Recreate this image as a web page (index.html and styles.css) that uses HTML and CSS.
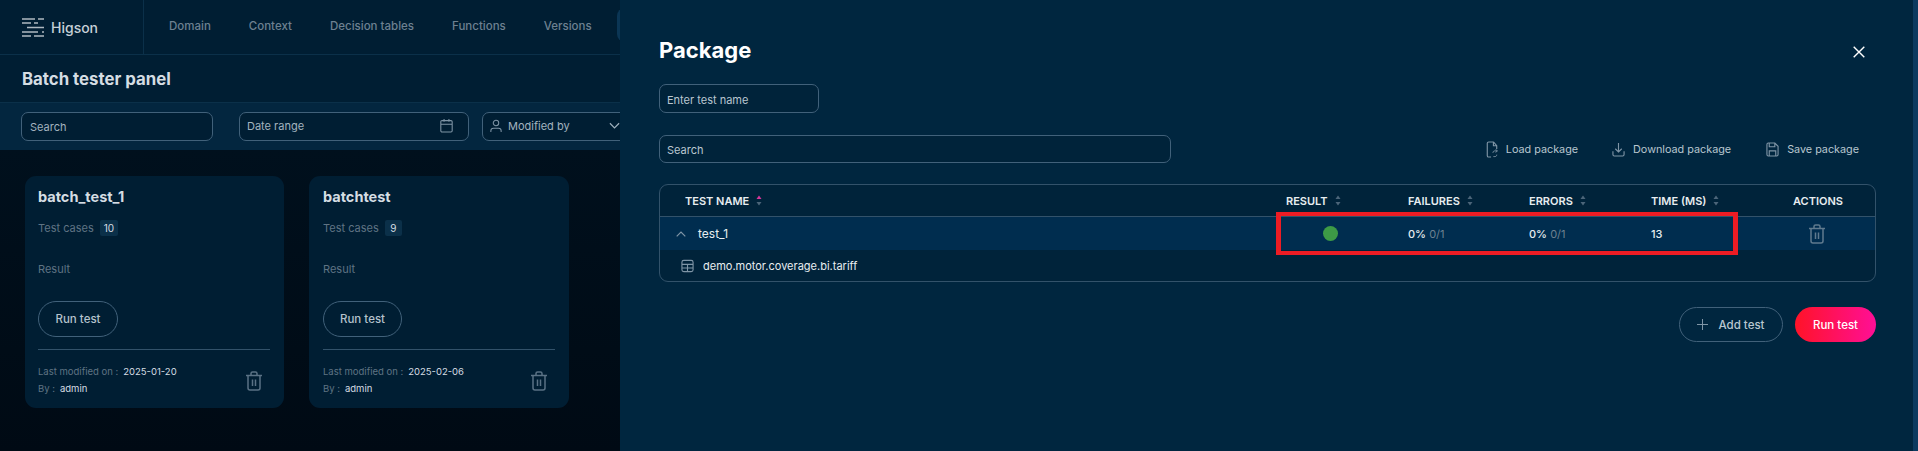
FILE: index.html
```html
<!DOCTYPE html>
<html lang="en">
<head>
<meta charset="utf-8">
<title>Batch tester panel</title>
<link rel="stylesheet" href="styles.css">
</head>
<body>
<svg class="defs" width="0" height="0" aria-hidden="true">
  <symbol id="trash" viewBox="0 0 18 20"><path d="M1 4.500h16M6 4.500V2.600C6 1.700 6.700 1 7.600 1h2.800c.9 0 1.600.7 1.600 1.600V4.500M3 4.500V17c0 1.100.9 2 2 2h8c1.100 0 2-.9 2-2V4.500" fill="none" stroke="currentColor" stroke-width="1.500"/><path d="M7.500 8.500v6.500M10.500 8.500v6.500" fill="none" stroke="currentColor" stroke-width="1.500"/></symbol>
  <symbol id="sort" viewBox="0 0 6 11"><path d="M3 0.500 5.500 4H.5z" fill="#4b6579"/><path d="M3 10.500 .5 7h5z" fill="#4b6579"/></symbol>
  <symbol id="sort-on" viewBox="0 0 6 11"><path d="M3 0.500 5.500 4H.5z" fill="#d6379a"/><path d="M3 10.500 .5 7h5z" fill="#4b6579"/></symbol>
</svg>
<div class="page">
  <header class="topbar">
    <div class="brand">
      <svg class="logo" viewBox="0 0 22 19" width="22" height="19"><path d="M0 1h13M16 1h6M0 5h9M12 5h4M5 9.500h17M0 14h16M20 14h2M0 18h9M12 18h10" fill="none" stroke="#aeb9c1" stroke-width="1.500"/></svg>
      <span class="brand-name">Higson</span>
    </div>
    <nav class="nav">
      <a class="nav-item">Domain</a>
      <a class="nav-item">Context</a>
      <a class="nav-item">Decision tables</a>
      <a class="nav-item">Functions</a>
      <a class="nav-item">Versions</a>
      <a class="nav-item nav-active">Batch tester</a>
    </nav>
  </header>
  <div class="titlebar"><h1>Batch tester panel</h1></div>
  <div class="filters">
    <div class="field field-search">Search</div>
    <div class="field field-date"><span>Date range</span>
      <svg viewBox="0 0 16 18" width="13" height="15"><path d="M1 4.500c0-.8.7-1.500 1.500-1.500h11c.8 0 1.500.7 1.500 1.500v11c0 .8-.7 1.500-1.500 1.500h-11C1.700 17 1 16.300 1 15.500zM1 7.500h14M5 1v3.500M11 1v3.500" fill="none" stroke="#7f95a6" stroke-width="1.300"/></svg>
    </div>
    <div class="field field-user">
      <svg viewBox="0 0 14 16" width="12" height="14"><circle cx="7" cy="4.500" r="3.200" fill="none" stroke="#7f95a6" stroke-width="1.200"/><path d="M1 15v-1.500C1 11.500 2.500 10.500 4 10.500h6c1.500 0 3 1 3 3V15" fill="none" stroke="#7f95a6" stroke-width="1.200"/></svg>
      <span>Modified by</span>
      <svg class="user-chevron" viewBox="0 0 12 8" width="11" height="8"><path d="M1 1l5 5 5-5" fill="none" stroke="#9fb0bd" stroke-width="1.300"/></svg>
    </div>
  </div>
  <main class="cards">
    <article class="card card-first">
      <h2>batch_test_1</h2>
      <div class="meta"><span class="muted">Test cases</span><span class="badge">10</span></div>
      <div class="result muted">Result</div>
      <button class="btn btn-card btn-wide">Run test</button>
      <div class="card-foot">
        <div class="mod">
          <div><span class="muted">Last modified on :</span><span class="val">2025-01-20</span></div>
          <div><span class="muted">By :</span><span class="val">admin</span></div>
        </div>
        <svg class="card-trash"><use href="#trash"/></svg>
      </div>
    </article>
    <article class="card">
      <h2>batchtest</h2>
      <div class="meta"><span class="muted">Test cases</span><span class="badge">9</span></div>
      <div class="result muted">Result</div>
      <button class="btn btn-card">Run test</button>
      <div class="card-foot">
        <div class="mod">
          <div><span class="muted">Last modified on :</span><span class="val">2025-02-06</span></div>
          <div><span class="muted">By :</span><span class="val">admin</span></div>
        </div>
        <svg class="card-trash"><use href="#trash"/></svg>
      </div>
    </article>
  </main>
</div>

<aside class="drawer">
  <div class="drawer-head">
    <h2 class="drawer-title">Package</h2>
    <svg class="close" viewBox="0 0 12 12" width="12" height="12"><path d="M.7.700l10.600 10.600M11.300.700.700 11.300" fill="none" stroke="#fff" stroke-width="1.400"/></svg>
  </div>
  <div class="dfield dfield-name">Enter test name</div>
  <div class="toolbar">
    <div class="dfield dfield-search">Search</div>
    <div class="actions">
      <a class="action action-load">
        <svg viewBox="0 0 12 18" width="12" height="17"><path d="M7.500 1H2.500C1.700 1 1 1.700 1 2.500v13c0 .8.700 1.500 1.500 1.500H5M7.500 1 11 5v3.500M7.500 1v4H11" fill="none" stroke="#7f95a6" stroke-width="1.200"/><path d="M7 12.500c0-1.500 1-2 2-2h2.500M10 8.800l1.700 1.700L10 12.200M11 14.500c0 1.500-1 2-2 2H7.500" fill="none" stroke="#7f95a6" stroke-width="1"/></svg>
        Load package</a>
      <a class="action action-down">
        <svg viewBox="0 0 14 16" width="13" height="15"><path d="M7 1v9.500M3.500 7.200 7 10.700l3.500-3.500M1 10v3.500c0 .8.700 1.500 1.500 1.500h9c.8 0 1.500-.7 1.500-1.500V10" fill="none" stroke="#7f95a6" stroke-width="1.200"/></svg>
        Download package</a>
      <a class="action">
        <svg viewBox="0 0 14 16" width="13" height="15"><path d="M1 2.500C1 1.700 1.700 1 2.500 1h7L13 4.500v9c0 .8-.7 1.500-1.500 1.500h-9C1.700 15 1 14.300 1 13.500zM3.500 1v4h6V1M3.500 15V9.500h7V15" fill="none" stroke="#7f95a6" stroke-width="1.200"/></svg>
        Save package</a>
    </div>
  </div>
  <section class="table">
    <div class="t-row t-head">
      <div class="c-name">TEST NAME<svg class="sort"><use href="#sort-on"/></svg></div>
      <div>RESULT<svg class="sort"><use href="#sort"/></svg></div>
      <div>FAILURES<svg class="sort"><use href="#sort"/></svg></div>
      <div>ERRORS<svg class="sort"><use href="#sort"/></svg></div>
      <div>TIME (MS)<svg class="sort"><use href="#sort"/></svg></div>
      <div>ACTIONS</div>
    </div>
    <div class="t-row t-body">
      <div class="c-test">
        <svg class="chev" viewBox="0 0 10 6" width="10" height="6"><path d="M.7 5.300 5 1l4.300 4.300" fill="none" stroke="#7f95a6" stroke-width="1.200"/></svg>
        <span class="test-name">test_1</span>
      </div>
      <div><span class="dot"></span></div>
      <div><b>0%</b> <span class="frac">0/1</span></div>
      <div><b>0%</b> <span class="frac">0/1</span></div>
      <div><b>13</b></div>
      <div><svg class="row-trash"><use href="#trash"/></svg></div>
    </div>
    <div class="t-sub">
      <svg viewBox="0 0 14 14" width="13" height="14"><path d="M1 3c0-1.100.9-2 2-2h8c1.100 0 2 .9 2 2v8c0 1.100-.9 2-2 2H3c-1.100 0-2-.9-2-2zM1 5.200h12M1 9.100h12M7 5.200V13" fill="none" stroke="#7f95a6" stroke-width="1.200"/></svg>
      <span>demo.motor.coverage.bi.tariff</span>
    </div>
  </section>
  <div class="foot">
    <button class="btn btn-add"><svg viewBox="0 0 12 12" width="11" height="11"><path d="M6 0v12M0 6h12" fill="none" stroke="#7f95a6" stroke-width="1.100"/></svg>Add test</button>
    <button class="btn btn-run">Run test</button>
  </div>
</aside>
<div class="annotation"></div>
</body>
</html>
```
FILE: styles.css
```css
* { box-sizing: border-box; }
html, body { margin: 0; height: 100%; }
body {
  position: relative;
  width: 1918px;
  height: 451px;
  overflow: hidden;
  background: #000c17;
  font-family: "Inter", "Noto Sans", sans-serif;
  font-size: 11px;
  color: #d5dde3;
}
.defs { position: absolute; }
h1, h2 { margin: 0; }

/* base page */
.page { height: 100%; display: flex; flex-direction: column; }
.topbar { height: 55px; display: flex; background: #001e33; border-bottom: 1px solid #0b3049; }
.brand { width: 144px; padding-left: 22px; display: flex; align-items: center; gap: 7px; border-right: 1px solid #0b3049; }
.logo { margin-top: 1px; }
.brand-name { font-size: 14px; font-weight: 500; color: #c6d0d7; }
.nav { display: flex; align-items: center; gap: 38px; padding: 0 0 2px 25px; white-space: nowrap; }
.nav-item { font-size: 11.500px; font-weight: 500; color: #6d8191; }
.nav-active { margin-left: -13px; height: 34px; padding: 10px 12px; border-radius: 8px; background: #0b3655; margin-top: -2px; }
.titlebar { height: 47px; padding-left: 22px; display: flex; align-items: center; background: #001e33; }
.titlebar h1 { font-size: 16.800px; font-weight: 700; color: #d5dde3; }
.filters { height: 48px; display: flex; align-items: center; padding-left: 21px; background: #03263f; border-top: 1px solid #0b3049; }
.field { height: 29px; display: flex; align-items: center; background: #001e33; border: 1px solid #41617a; border-radius: 7px; color: #a3b3bf; font-size: 11px; }
.field-search { width: 192px; padding-left: 8px; margin-right: 26px; }
.field-date { width: 230px; padding: 0 15px 2px 7px; margin-right: 13px; justify-content: space-between; }
.field-user { width: 170px; flex: none; padding: 0 0 2px 7px; gap: 6px; }
.user-chevron { margin-left: 33px; }
.cards { flex: 1; display: flex; gap: 25px; padding: 26px 0 0 25px; background: linear-gradient(180deg, #00101d 0%, #000a14 100%); }
.card { width: 260px; height: 232px; padding: 11px 13px 0 14px; background: #001e33; border-radius: 11px; }
.card-first { width: 259px; padding-left: 13px; }
.card h2 { font-size: 14.500px; line-height: 20px; font-weight: 700; color: #d5dde3; }
.muted { color: #5f7383; }
.meta { margin-top: 13px; height: 16px; display: flex; align-items: center; gap: 6px; font-size: 11px; }
.badge { min-width: 17px; height: 16px; padding: 0 4px; display: flex; align-items: center; justify-content: center; border-radius: 2px; background: #0b3049; color: #d5dde3; font-size: 10px; }
.result { margin-top: 25px; line-height: 16px; font-size: 11px; }
.btn { font-family: inherit; cursor: pointer; }
.btn-card { display: block; margin-top: 24px; width: 79px; height: 36px; padding: 0; background: transparent; border: 1px solid #41617a; border-radius: 18px; color: #b5c2cc; font-size: 11.500px; font-weight: 500; }
.btn-wide { width: 80px; }
.card-foot { margin-top: 12px; padding: 13px 0 0 0; width: 232px; border-top: 1px solid #32526a; display: flex; justify-content: space-between; }
.mod { font-size: 9.500px; line-height: 17px; }
.val { margin-left: 5px; color: #d5dde3; }
.card-trash { width: 18px; height: 20px; margin: 8px 7px 0 0; color: #5a7285; }

/* drawer */
.drawer { position: absolute; top: 0; right: 0; bottom: 0; left: 620px; padding: 34px 37px 0 39px; background: #00263f; border-right: 5px solid #0c3a5f; }
.drawer-head { display: flex; justify-content: space-between; align-items: center; height: 32px; padding-bottom: 1px; }
.drawer-title { font-size: 22px; font-weight: 700; color: #fff; }
.close { margin-right: 11px; margin-top: 4px; }
.dfield { height: 29px; display: flex; align-items: center; padding: 2px 0 0 7px; border: 1px solid #41617a; border-radius: 7px; background: #00233a; color: #b9c6d0; font-size: 11px; }
.dfield-name { width: 160px; margin-top: 18px; }
.toolbar { margin-top: 22px; display: flex; align-items: center; }
.dfield-search { width: 512px; height: 28px; }
.actions { display: flex; gap: 35px; margin-left: auto; padding: 1px 17px 0 0; color: #b9c6d0; font-size: 10.800px; }
.action { display: flex; align-items: center; gap: 8px; }
.action-load { margin-right: -1px; }
.table { margin-top: 21px; height: 98px; border: 1px solid #32526a; border-radius: 9px; background: #00233a; overflow: hidden; }
.t-row { display: grid; grid-template-columns: 626px 122px 121px 122px 142px 82px; align-items: center; }
.t-head { height: 32px; border-bottom: 1px solid #32526a; font-size: 11px; font-weight: 600; color: #e8edf0; white-space: nowrap; }
.c-name { padding-left: 25px; }
.sort { width: 6px; height: 11px; margin-left: 7px; vertical-align: -1px; }
.t-body { height: 33px; background: #002d4f; font-size: 11px; color: #e8edf0; }
.t-body b { font-weight: 500; }
.c-test { display: flex; align-items: center; gap: 12px; padding-left: 16px; }
.test-name { font-size: 12px; }
.frac { color: #6d8191; }
.dot { display: block; width: 15px; height: 15px; margin-left: 37px; border-radius: 50%; background: #3d9a46; }
.row-trash { display: block; width: 18px; height: 20px; margin-left: 15px; color: #5f7a8e; }
.t-sub { height: 31px; display: flex; align-items: center; gap: 9px; padding-left: 21px; font-size: 11px; color: #e8edf0; }
.foot { margin-top: 25px; display: flex; justify-content: flex-end; gap: 12px; }
.btn-add { width: 104px; height: 35px; display: flex; align-items: center; justify-content: center; gap: 10px; padding: 0; background: transparent; border: 1px solid #41617a; border-radius: 18px; color: #b9c6d0; font-size: 11.500px; font-weight: 500; }
.btn-run { width: 81px; height: 35px; padding: 0; border: 0; border-radius: 18px; background: linear-gradient(90deg, #ff1328, #ff0f96); color: #fff; font-size: 11.500px; font-weight: 500; }

/* review annotation drawn over the screenshot */
.annotation { position: absolute; left: 1276px; top: 212px; width: 462px; height: 43px; border: 4px solid #ed1c24; border-left-width: 5px; border-right-width: 5px; }
```
